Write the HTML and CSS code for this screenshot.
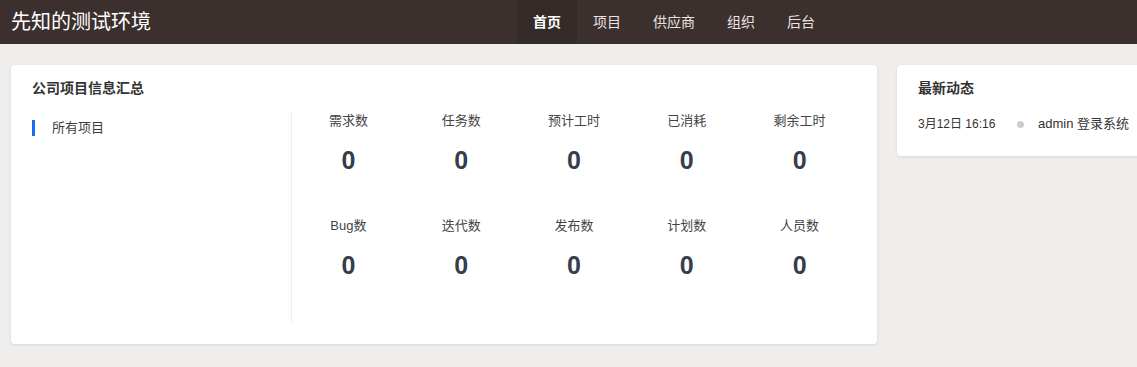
FILE: index.html
```html
<!DOCTYPE html>
<html lang="zh-CN">
<head>
    <meta charset="UTF-8">
    <meta name="viewport" content="width=device-width, initial-scale=1.0">
    <title>先知的测试环境</title>
    <link rel="stylesheet" href="styles.css">
</head>
<body>
    <header>
        <div class="brand">先知的测试环境</div>
        <nav>
            <a href="#" class="active">首页</a>
            <a href="#">项目</a>
            <a href="#">供应商</a>
            <a href="#">组织</a>
            <a href="#">后台</a>
        </nav>
    </header>
    <main>
        <!-- 项目汇总 -->
        <section class="card summary">
            <h3 class="card-title">公司项目信息汇总</h3>
            <div class="summary-body">
                <ul class="project-list">
                    <li class="active">所有项目</li>
                </ul>
                <div class="stats">
                    <div class="stat"><span class="label">需求数</span><span class="num">0</span></div>
                    <div class="stat"><span class="label">任务数</span><span class="num">0</span></div>
                    <div class="stat"><span class="label">预计工时</span><span class="num">0</span></div>
                    <div class="stat"><span class="label">已消耗</span><span class="num">0</span></div>
                    <div class="stat"><span class="label">剩余工时</span><span class="num">0</span></div>
                    <div class="stat"><span class="label">Bug数</span><span class="num">0</span></div>
                    <div class="stat"><span class="label">迭代数</span><span class="num">0</span></div>
                    <div class="stat"><span class="label">发布数</span><span class="num">0</span></div>
                    <div class="stat"><span class="label">计划数</span><span class="num">0</span></div>
                    <div class="stat"><span class="label">人员数</span><span class="num">0</span></div>
                </div>
            </div>
        </section>

        <!-- 最新动态 -->
        <section class="card activity">
            <h3 class="card-title">最新动态</h3>
            <ul class="feed">
                <li>
                    <span class="time">3月12日 16:16</span>
                    <span class="dot"></span>
                    <span class="text">admin 登录系统</span>
                </li>
            </ul>
        </section>
    </main>
</body>
</html>
```

FILE: styles.css
```css
body {
    font-family: 'Liberation Sans', 'Noto Sans CJK SC', sans-serif;
    margin: 0;
    padding: 0;
    background-color: #efeeec;
    color: #3c3c3c;
    overflow: hidden;
}
header {
    display: flex;
    align-items: center;
    height: 44px;
    background-color: #3b302e;
    padding-left: 11px;
}
.brand {
    color: #fff;
    font-size: 20px;
    line-height: 44px;
    width: 140px;
}
nav {
    display: flex;
    margin-left: 366px;
    height: 44px;
}
nav a {
    color: #e8e4e2;
    text-decoration: none;
    font-size: 14px;
    line-height: 44px;
    padding: 0 16px;
}
nav a.active {
    background-color: #342a28;
    color: #fff;
    font-weight: bold;
}
main {
    display: flex;
    align-items: flex-start;
    gap: 20px;
    padding: 21px 11px;
}
.card {
    background-color: #fff;
    border-radius: 4px;
    box-shadow: 0 1px 3px rgba(0, 0, 0, 0.1);
    padding: 13px 21px 21px;
    box-sizing: border-box;
}
.card-title {
    margin: 0;
    font-size: 14px;
    line-height: 20px;
    font-weight: bold;
    color: #333;
}
.summary {
    width: 866px;
    flex: none;
}
.summary-body {
    display: flex;
    margin-top: 13px;
}
.project-list {
    list-style: none;
    margin: 0;
    padding: 0;
    width: 259px;
    border-right: 1px solid #eeeef2;
}
.project-list li {
    font-size: 13px;
    line-height: 16px;
    margin-top: 9px;
    padding-left: 20px;
    color: #3c3c3c;
}
.project-list li.active {
    border-left: 3px solid #1a6cf0;
    padding-left: 17px;
}
.stats {
    flex: 1;
    display: grid;
    grid-template-columns: repeat(5, 1fr);
    row-gap: 41px;
    padding-bottom: 43px;
}
.stat {
    display: flex;
    flex-direction: column;
    align-items: center;
}
.stat .label {
    font-size: 13px;
    line-height: 20px;
    color: #444;
}
.stat .num {
    margin-top: 14px;
    font-size: 25px;
    line-height: 30px;
    font-weight: bold;
    color: #363d4c;
}
.activity {
    flex: none;
    width: 260px;
    padding-bottom: 22px;
}
.feed {
    list-style: none;
    margin: 16px 0 0;
    padding: 0;
}
.feed li {
    display: flex;
    align-items: center;
    font-size: 12px;
    line-height: 20px;
    color: #333;
}
.feed .time {
    width: 78px;
}
.feed .dot {
    width: 7px;
    height: 7px;
    border-radius: 50%;
    background-color: #cbcbd3;
    margin: 0 14px 0 21px;
}
.feed .text {
    font-size: 13px;
    white-space: nowrap;
}
```
